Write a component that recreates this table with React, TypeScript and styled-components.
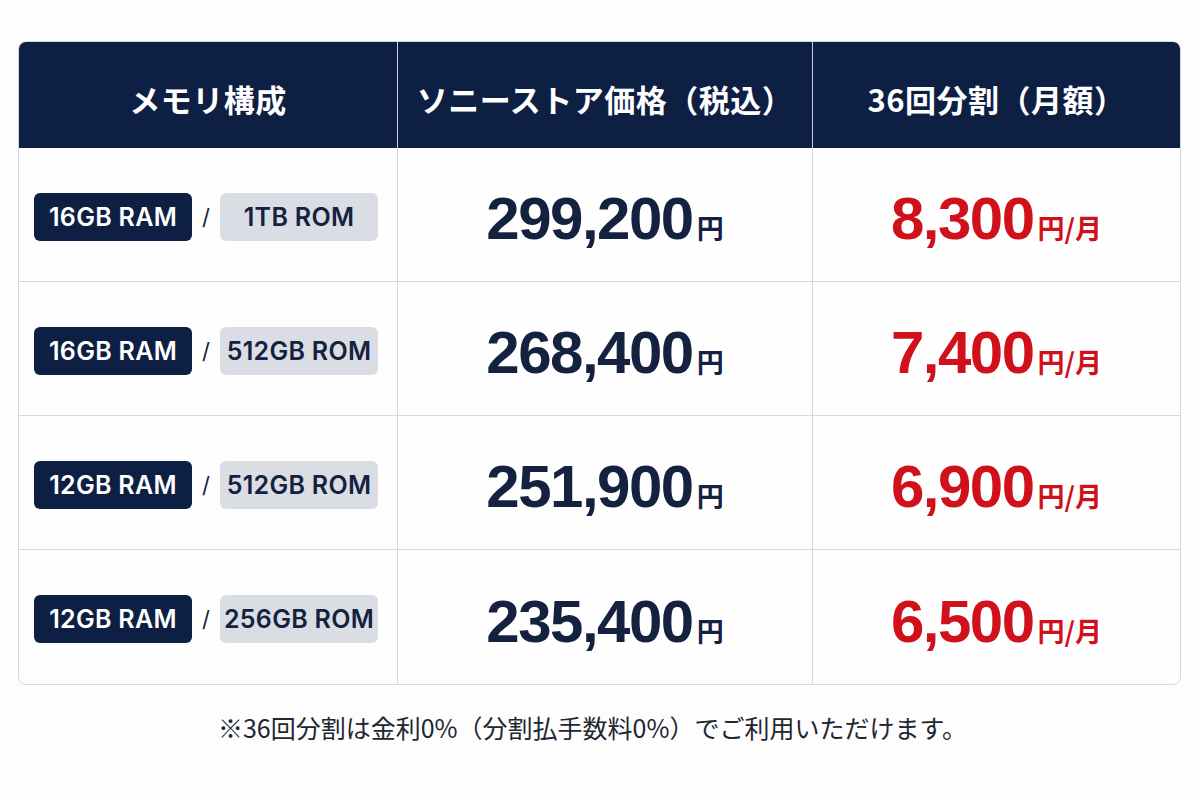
import React from 'react';
import styled, { createGlobalStyle } from 'styled-components';

const GlobalStyle = createGlobalStyle`
  html, body {
    margin: 0;
    padding: 0;
    background: #fdfdfd;
  }
  body {
    font-family: 'Noto Sans CJK JP', 'Noto Sans', sans-serif;
    color: #14213f;
  }
`;

type Plan = { ram: string; rom: string; price: string; monthly: string };

const plans: Plan[] = [
  { ram: '16GB RAM', rom: '1TB ROM', price: '299,200', monthly: '8,300' },
  { ram: '16GB RAM', rom: '512GB ROM', price: '268,400', monthly: '7,400' },
  { ram: '12GB RAM', rom: '512GB ROM', price: '251,900', monthly: '6,900' },
  { ram: '12GB RAM', rom: '256GB ROM', price: '235,400', monthly: '6,500' }
];

const App = () => {
  return (
    <Page>
      <GlobalStyle />
      <Table>
        <HeadCell>メモリ構成</HeadCell>
        <HeadCell>ソニーストア価格（税込）</HeadCell>
        <HeadCell last>36回分割（月額）</HeadCell>
        {plans.map((p, i) => (
          <React.Fragment key={i}>
            <Cell bottom={i === plans.length - 1}>
              <Spec>
                <Pill variant="dark">{p.ram}</Pill>
                <Slash>/</Slash>
                <Pill variant="light">{p.rom}</Pill>
              </Spec>
            </Cell>
            <Cell bottom={i === plans.length - 1}>
              <Price>
                <Amount>{p.price}</Amount>
                <Unit>円</Unit>
              </Price>
            </Cell>
            <Cell bottom={i === plans.length - 1} last>
              <Price red>
                <Amount>{p.monthly}</Amount>
                <Unit>円/月</Unit>
              </Price>
            </Cell>
          </React.Fragment>
        ))}
      </Table>
      <Note>※36回分割は金利0%（分割払手数料0%）でご利用いただけます。</Note>
    </Page>
  );
};

const Page = styled.div`
  padding: 41px 19px 0 18px;
  display: flex;
  flex-direction: column;
  align-items: stretch;
`;

const Table = styled.div`
  display: grid;
  grid-template-columns: 379px 415px 1fr;
  grid-template-rows: 106px repeat(4, 134px);
  border: 1px solid #d6d9df;
  border-radius: 8px;
  overflow: hidden;
  background: #fefefe;
`;

const HeadCell = styled.div<{ last?: boolean }>`
  background: #0e1f44;
  color: #ffffff;
  font-family: 'Noto Sans CJK JP', sans-serif;
  font-weight: 700;
  font-size: 31px;
  letter-spacing: 0.5px;
  display: flex;
  align-items: center;
  justify-content: center;
  padding-top: 6px;
  border-right: ${(p) => (p.last ? 'none' : '1px solid #c9ced8')};
`;

const Cell = styled.div<{ last?: boolean; bottom?: boolean }>`
  display: flex;
  align-items: center;
  justify-content: center;
  border-right: ${(p) => (p.last ? 'none' : '1px solid #d6d9df')};
  border-bottom: ${(p) => (p.bottom ? 'none' : '1px solid #d6d9df')};
`;

const Spec = styled.div`
  display: flex;
  align-items: center;
  gap: 8px;
  width: 100%;
  padding: 4px 0 0 15px;
`;

const Pill = styled.span<{ variant: 'dark' | 'light' }>`
  width: 158px;
  height: 48px;
  border-radius: 6px;
  display: flex;
  align-items: center;
  justify-content: center;
  font-family: Inter, 'Noto Sans', sans-serif;
  font-weight: 600;
  font-size: 25px;
  letter-spacing: 0.3px;
  background: ${(p) => (p.variant === 'dark' ? '#0e1f44' : '#dadde3')};
  color: ${(p) => (p.variant === 'dark' ? '#ffffff' : '#14213f')};
`;

const Slash = styled.span`
  font-family: Inter, sans-serif;
  font-size: 22px;
  color: #14213f;
  width: 12px;
  text-align: center;
`;

const Price = styled.div<{ red?: boolean }>`
  display: flex;
  align-items: baseline;
  gap: 4px;
  color: ${(p) => (p.red ? '#d0111b' : '#14213f')};
  padding-top: 8px;
`;

const Amount = styled.span`
  font-family: 'Liberation Sans', Arial, sans-serif;
  font-weight: 700;
  font-size: 60px;
  letter-spacing: -1.5px;
`;

const Unit = styled.span`
  font-family: 'Noto Sans CJK JP', sans-serif;
  font-weight: 700;
  font-size: 27px;
`;

const Note = styled.p`
  margin: 24px 0 0;
  text-align: center;
  font-family: 'Noto Sans CJK JP', sans-serif;
  font-size: 25px;
  color: #222631;
  padding-right: 14px;
`;

export default App;
